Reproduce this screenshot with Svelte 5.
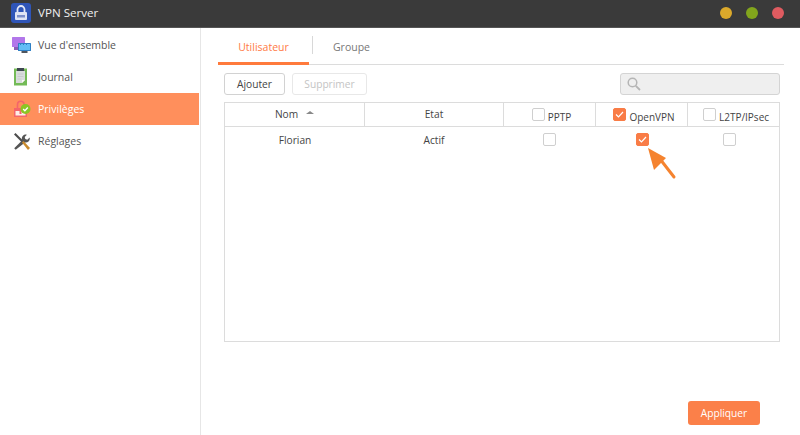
<script>
  const nav = [
    { id: 'overview', label: "Vue d'ensemble" },
    { id: 'log', label: 'Journal' },
    { id: 'priv', label: 'Privilèges', active: true },
    { id: 'settings', label: 'Réglages' }
  ];
</script>

<div class="app">
  <header class="titlebar">
    <svg class="logo" width="20" height="20" viewBox="0 0 20 20">
      <rect width="20" height="20" rx="3" fill="#2f55b8" />
      <path d="M6.500 9V6.500a3.500 3.500 0 0 1 7 0V9" fill="none" stroke="#e4e8f6" stroke-width="1.800" />
      <rect x="4" y="9" width="12" height="8" rx="1" fill="#dfe4f4" />
      <rect x="6" y="12" width="8" height="2.500" fill="#7d8fc9" />
    </svg>
    <span class="app-title">VPN Server</span>
    <div class="dots">
      <i class="dot yellow"></i><i class="dot green"></i><i class="dot red"></i>
    </div>
  </header>

  <div class="body">
    <aside class="sidebar">
      {#each nav as item}
        <div class="nav-item" class:active={item.active}>
          <span class="nav-icon">
            {#if item.id === 'overview'}
              <svg width="20" height="20" viewBox="0 0 20 20">
                <rect x="0" y="2" width="13" height="10" rx="0.500" fill="#b277ea" />
                <path d="M2 12h6l-1 3H2z" fill="#8a5fb5" />
                <rect x="6" y="8" width="13" height="8" rx="0.500" fill="#2f7fc4" />
                <rect x="7" y="9" width="11" height="6" fill="#62bdf5" />
                <path d="M8 9h1v1H8zM11 9h1v1h-1zM14 9h1v1h-1z" fill="#2f7fc4" />
                <rect x="9.500" y="16" width="6" height="2" fill="#50565e" />
              </svg>
            {:else if item.id === 'log'}
              <svg width="20" height="20" viewBox="0 0 20 20">
                <rect x="2" y="1.500" width="13" height="17" fill="#74bb57" />
                <path d="M4 4h9v9l-3 3H4z" fill="#d9dcdc" />
                <path d="M13 13l-3 3v-3z" fill="#fafafa" />
                <rect x="5" y="1" width="7" height="3" fill="#3e4650" />
                <path d="M5.500 7h6M5.500 9.500h6M5.500 12h4" stroke="#c3c7c9" stroke-width="0.800" />
              </svg>
            {:else if item.id === 'priv'}
              <svg width="20" height="20" viewBox="0 0 20 20">
                <path d="M5.500 9V5.500a3.300 3.300 0 0 1 6.600 0V7" fill="none" stroke="#f4656a" stroke-width="1.600" />
                <rect x="2" y="9" width="13" height="9" fill="#f4656a" />
                <rect x="3.500" y="12" width="10" height="4.500" fill="#fdeee8" />
                <rect x="7.500" y="12" width="2" height="3" fill="#f4656a" />
                <circle cx="13.500" cy="10" r="5" fill="#8bc624" />
                <path d="M11.200 10l1.700 1.800 2.900-3.300" fill="none" stroke="#fff" stroke-width="1.300" />
              </svg>
            {:else}
              <svg width="20" height="20" viewBox="0 0 20 20">
                <path d="M2 3.500L3.500 2l7.500 7.500-1.500 1.500z" fill="#4c4c4c" />
                <path d="M10 9.500l-7.800 7.800 1.500 1.500L13 11.500c2 .6 4.800-1 4.800-4l-.2-1-2.300 2.200-2-.7-.6-2 2.200-2.300-1-.2c-3 0-4.600 2.700-3.900 5.500z" fill="#555" />
                <path d="M10 11.500l1.500-1.500 6.500 7-2 2z" fill="#c98a2c" />
              </svg>
            {/if}
          </span>
          <span class="nav-label">{item.label}</span>
        </div>
      {/each}
    </aside>

    <main class="content">
      <nav class="tabs">
        <div class="tab active">Utilisateur</div>
        <span class="tab-sep"></span>
        <div class="tab">Groupe</div>
      </nav>

      <div class="toolbar">
        <button class="btn">Ajouter</button>
        <button class="btn disabled">Supprimer</button>
        <div class="search">
          <svg width="14" height="14" viewBox="0 0 14 14">
            <circle cx="5.500" cy="5.500" r="4.300" fill="none" stroke="#b5b5b5" stroke-width="1.500" />
            <path d="M8.800 8.800L13 13" stroke="#b5b5b5" stroke-width="1.800" />
          </svg>
        </div>
      </div>

      <div class="table">
        <div class="row head">
          <div class="cell">Nom <span class="sort"></span></div>
          <div class="cell">Etat</div>
          <div class="cell hcheck first"><span class="cb large"></span><span class="hl">PPTP</span></div>
          <div class="cell hcheck">
            <span class="cb large on">
              <svg width="13" height="13" viewBox="0 0 13 13"><path d="M3 6.500l2.500 2.500 4.500-5" fill="none" stroke="#fff" stroke-width="1.200" /></svg>
            </span><span class="hl">OpenVPN</span>
          </div>
          <div class="cell hcheck"><span class="cb large"></span><span class="hl">L2TP/IPsec</span></div>
        </div>
        <div class="row data">
          <div class="cell">Florian</div>
          <div class="cell">Actif</div>
          <div class="cell"><span class="cb"></span></div>
          <div class="cell">
            <span class="cb on">
              <svg width="13" height="13" viewBox="0 0 13 13"><path d="M3 6.500l2.500 2.500 4.500-5" fill="none" stroke="#fff" stroke-width="1.200" /></svg>
            </span>
          </div>
          <div class="cell"><span class="cb"></span></div>
        </div>
      </div>

      <div class="footer">
        <button class="apply">Appliquer</button>
      </div>
    </main>
  </div>

  <svg class="arrow" width="30" height="34" viewBox="0 0 30 34">
    <path d="M12 11L26 29" stroke="#f5832f" stroke-width="3" stroke-linecap="round" />
    <path d="M0 0L18 10 6 22z" fill="#f5832f" />
  </svg>
</div>

<style>
  :global(body) { margin: 0; background: #fff; }
  .app {
    position: relative;
    width: 800px;
    height: 435px;
    overflow: hidden;
    font-family: "Open Sans", "Noto Sans", sans-serif;
    font-size: 10.500px;
    color: #444;
    background: #fff;
  }
  .titlebar {
    height: 28px;
    box-sizing: border-box;
    display: flex;
    align-items: center;
    padding: 0 0 1px 11px;
    background: #3a3a3a;
    border-bottom: 1px solid #555;
    color: #f0f0f0;
  }
  .logo { flex: none; }
  .app-title { margin-left: 7px; font-size: 11.600px; margin-bottom: 1px; }
  .dots { margin-left: auto; display: flex; gap: 14px; padding-right: 16px; }
  .dot { width: 12px; height: 12px; border-radius: 50%; display: block; }
  .yellow { background: #dba92b; }
  .green { background: #82a51c; }
  .red { background: #df5b60; }
  .body { display: flex; height: 407px; }
  .sidebar {
    width: 201px;
    flex: none;
    box-sizing: border-box;
    border-right: 1px solid #e6e6e6;
    padding-top: 1px;
  }
  .nav-item {
    height: 32px;
    width: 199px;
    display: flex;
    align-items: center;
    color: #555;
  }
  .nav-item.active { background: #ff8f5c; color: #fff; }
  .nav-icon {
    width: 38px;
    padding-left: 12px;
    box-sizing: border-box;
    display: flex;
    flex: none;
  }
  .content { flex: 1; padding: 0 16px 0 17px; display: flex; flex-direction: column; }
  .tabs {
    height: 37px;
    box-sizing: border-box;
    border-bottom: 1px solid #dcdcdc;
    display: flex;
    align-items: center;
    padding-top: 1px;
  }
  .tab {
    width: 91px;
    height: 36px;
    line-height: 36px;
    text-align: center;
    color: #777;
    box-sizing: border-box;
  }
  .tab.active { color: #ff7a45; border-bottom: 3px solid #ff7a3c; }
  .tab-sep { width: 1px; height: 18px; background: #d8d8d8; margin: 0 2px 4px 3px; }
  .tab:last-child { width: 73px; }
  .toolbar {
    display: flex;
    align-items: center;
    height: 22px;
    margin: 8px 0 7px 6px;
    padding-right: 4px;
  }
  .btn {
    height: 22px;
    width: 61px;
    padding: 0;
    font: inherit;
    font-size: 10.200px;
    color: #444;
    background: #fff;
    border: 1px solid #d2d2d2;
    border-radius: 3px;
  }
  .btn.disabled { width: 75px; margin-left: 7px; color: #c4c4c4; border-color: #e8e8e8; }
  .search {
    margin-left: auto;
    width: 160px;
    height: 22px;
    box-sizing: border-box;
    background: #efefef;
    border: 1px solid #d4d4d4;
    border-radius: 3px;
    display: flex;
    align-items: center;
    padding-left: 6px;
  }
  .table {
    margin-left: 6px;
    margin-right: 4px;
    width: 556px;
    height: 240px;
    box-sizing: border-box;
    border: 1px solid #dcdcdc;
    font-size: 10.200px;
  }
  .row {
    display: grid;
    grid-template-columns: 140px 139px 92px 92px 91px;
  }
  .head { height: 24px; border-bottom: 1px solid #dcdcdc; box-sizing: border-box; }
  .head .cell { border-right: 1px solid #dcdcdc; box-sizing: border-box; }
  .head .cell:last-child { border-right: 0; }
  .data { height: 27px; grid-template-columns: 140px 138px 93px 93px 81px; }
  .cell {
    display: flex;
    align-items: center;
    justify-content: center;
    color: #444;
    padding-bottom: 2px;
    box-sizing: border-box;
  }
  .sort {
    width: 0;
    height: 0;
    margin-left: 8px;
    margin-bottom: 2px;
    border-left: 4px solid transparent;
    border-right: 4px solid transparent;
    border-bottom: 3px solid #888;
  }
  .hcheck { font-size: 10px; align-items: flex-end; padding: 0 0 3px 5px; }
  .hcheck.first { padding-left: 4px; }
  .hl { margin: 0 0 -1px 3px; }
  .cb {
    width: 13px;
    height: 13px;
    box-sizing: border-box;
    border: 1px solid #cfcfcf;
    border-radius: 2px;
    background: #fff;
    display: block;
    flex: none;
    margin-top: -1px;
  }
  .cb.large { margin-bottom: 2px; }
  .cb.on { background: #f97c46; border-color: #f97c46; position: relative; }
  .cb.on svg { position: absolute; left: -1px; top: -1px; }
  .footer { display: flex; justify-content: flex-end; padding: 59px 24px 0 0; }
  .apply {
    width: 72px;
    height: 24px;
    padding: 0;
    font: inherit;
    font-size: 10.200px;
    color: #fff;
    background: #fb8049;
    border: 0;
    border-radius: 3px;
  }
  .arrow { position: absolute; left: 648px; top: 148px; }
</style>
